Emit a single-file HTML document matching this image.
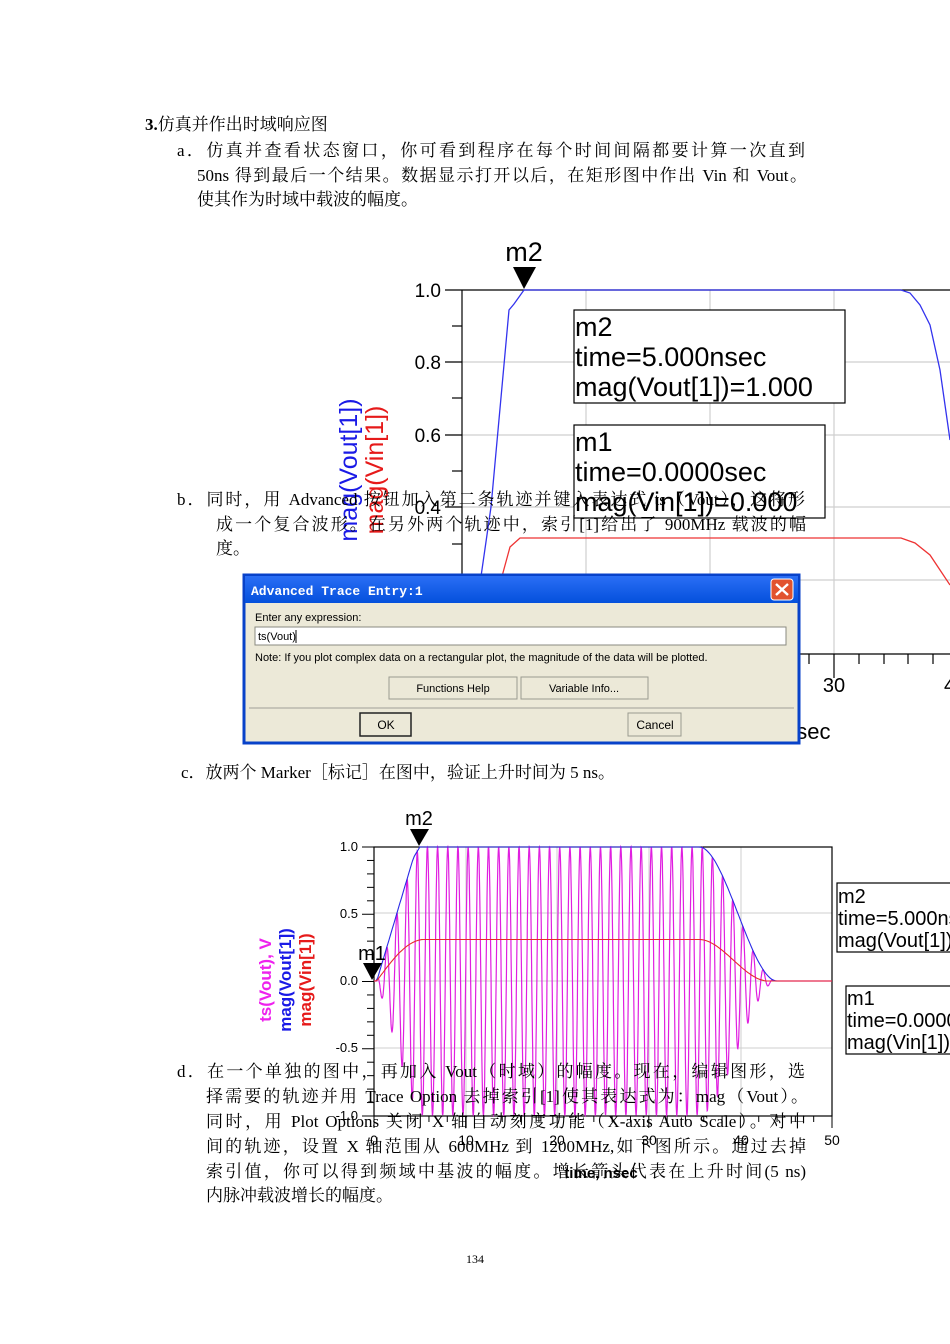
<!DOCTYPE html>
<html><head><meta charset="utf-8"><style>
html,body{margin:0;padding:0;background:#fff;width:950px;height:1344px;overflow:hidden;position:relative}
svg{display:block;position:absolute;left:0;top:0}
.s{font-family:"Liberation Sans",sans-serif}
.l{position:absolute;font-family:"Liberation Serif","Noto Serif CJK SC",serif;font-size:17px;line-height:20px;white-space:nowrap;color:#000}
.j{text-align:justify;text-align-last:justify;white-space:normal;overflow:hidden;height:20px}
</style></head><body>
<svg id="sv" width="950" height="1344" viewBox="0 0 950 1344" xmlns="http://www.w3.org/2000/svg">
<rect width="950" height="1344" fill="#fff"/>

<!-- ===== TOP CHART ===== -->
<g stroke="#cfcfcf" stroke-width="1.2">
  <line x1="462" y1="362" x2="950" y2="362"/><line x1="462" y1="435" x2="950" y2="435"/>
  <line x1="462" y1="507" x2="950" y2="507"/><line x1="462" y1="580" x2="950" y2="580"/>
  <line x1="586" y1="290" x2="586" y2="654"/><line x1="710" y1="290" x2="710" y2="654"/>
  <line x1="834" y1="290" x2="834" y2="654"/>
</g>
<g stroke="#000" stroke-width="1.2">
  <line x1="462" y1="290" x2="950" y2="290"/>
  <line x1="462" y1="290" x2="462" y2="654"/>
  <line x1="462" y1="654" x2="950" y2="654"/>
  <line x1="445" y1="290" x2="462" y2="290"/><line x1="445" y1="362" x2="462" y2="362"/>
  <line x1="445" y1="435" x2="462" y2="435"/><line x1="445" y1="507" x2="462" y2="507"/>
  <line x1="445" y1="580" x2="462" y2="580"/>
  <line x1="452" y1="326" x2="462" y2="326"/><line x1="452" y1="398" x2="462" y2="398"/>
  <line x1="452" y1="471" x2="462" y2="471"/><line x1="452" y1="544" x2="462" y2="544"/>
  <line x1="809" y1="654" x2="809" y2="664"/><line x1="834" y1="654" x2="834" y2="678"/>
  <line x1="859" y1="654" x2="859" y2="664"/><line x1="884" y1="654" x2="884" y2="664"/>
  <line x1="908" y1="654" x2="908" y2="664"/><line x1="933" y1="654" x2="933" y2="664"/>
</g>
<g class="s" font-size="19" fill="#000" text-anchor="end">
  <text x="441" y="297">1.0</text><text x="441" y="369">0.8</text>
  <text x="441" y="442">0.6</text><text x="441" y="514">0.4</text><text x="441" y="587">0.2</text>
</g>
<text class="s" x="834" y="692" font-size="20" text-anchor="middle">30</text>
<text class="s" x="944" y="692" font-size="20">4</text>
<text class="s" x="784" y="739" font-size="22">nsec</text>
<polyline fill="none" stroke="#3333ee" stroke-width="1.3" points="470,653 491,507 509,310 514,304 524,290 901,290 910,293 920,305 930,325 940,370 950,440"/>
<polyline fill="none" stroke="#ee3333" stroke-width="1.3" points="485,653 494,610 501,580 510,547 520,538 901,538 915,543 930,555 940,570 950,585"/>
<text class="s" x="524" y="261" font-size="27" text-anchor="middle">m2</text>
<polygon points="513,267 536,267 524,289" fill="#000"/>
<g transform="translate(357,470) rotate(-90)"><text class="s" font-size="25" fill="#1a1ae6" text-anchor="middle">mag(Vout[1])</text></g>
<g transform="translate(383,470) rotate(-90)"><text class="s" font-size="25" fill="#e61a1a" text-anchor="middle">mag(Vin[1])</text></g>
<rect x="574" y="310" width="271" height="93" fill="#fff" stroke="#000" stroke-width="1.2"/>
<g class="s" font-size="27" fill="#000">
  <text x="575" y="336">m2</text><text x="575" y="366">time=5.000nsec</text><text x="575" y="396">mag(Vout[1])=1.000</text>
</g>
<rect x="574" y="425" width="251" height="93" fill="#fff" stroke="#000" stroke-width="1.2"/>
<g class="s" font-size="27" fill="#000">
  <text x="575" y="451">m1</text><text x="575" y="481">time=0.0000sec</text><text x="575" y="511">mag(Vin[1])=0.000</text>
</g>

<!-- ===== DIALOG ===== -->
<rect x="244" y="575" width="555" height="168" fill="#ece9d8" stroke="#0842c9" stroke-width="3"/>
<defs><linearGradient id="tb" x1="0" y1="0" x2="0" y2="1"><stop offset="0" stop-color="#2a6ef5"/><stop offset="1" stop-color="#0450dc"/></linearGradient></defs>
<rect x="245" y="576" width="553" height="27" fill="url(#tb)"/>
<text x="251" y="595" font-family="Liberation Mono,monospace" font-weight="bold" font-size="13" fill="#fff">Advanced Trace Entry:1</text>
<rect x="771" y="579" width="22" height="21" rx="3" fill="#e2532f" stroke="#fff" stroke-width="1"/>
<path d="M776,584 L788,595 M788,584 L776,595" stroke="#fff" stroke-width="2.4"/>
<g class="s" font-size="11" fill="#000">
  <text x="255" y="621">Enter any expression:</text>
  <text x="255" y="661">Note: If you plot complex data on a rectangular plot, the magnitude of the data will be plotted.</text>
</g>
<rect x="255" y="627" width="531" height="18" fill="#fff" stroke="#8a8a80" stroke-width="1"/>
<text class="s" x="258" y="640" font-size="11">ts(Vout)</text>
<line x1="296" y1="630" x2="296" y2="643" stroke="#000"/>
<rect x="389" y="677" width="128" height="22" fill="#ece9d8" stroke="#9a9a90"/>
<rect x="521" y="677" width="127" height="22" fill="#ece9d8" stroke="#9a9a90"/>
<text class="s" x="453" y="692" font-size="11" text-anchor="middle">Functions Help</text>
<text class="s" x="584" y="692" font-size="11" text-anchor="middle">Variable Info...</text>
<line x1="249" y1="708" x2="794" y2="708" stroke="#a0a098"/>
<rect x="360" y="713" width="51" height="23" fill="#ece9d8" stroke="#222" stroke-width="1.5"/>
<rect x="628" y="713" width="53" height="23" fill="#ece9d8" stroke="#9a9a90"/>
<text class="s" x="386" y="729" font-size="12" text-anchor="middle">OK</text>
<text class="s" x="655" y="729" font-size="12" text-anchor="middle">Cancel</text>

<!-- ===== BOTTOM CHART ===== -->
<g stroke="#cfcfcf" stroke-width="1">
  <line x1="374" y1="913" x2="832" y2="913"/><line x1="374" y1="981" x2="832" y2="981"/>
  <line x1="374" y1="1048" x2="832" y2="1048"/>
  <line x1="466" y1="847" x2="466" y2="1116"/><line x1="557" y1="847" x2="557" y2="1116"/>
  <line x1="649" y1="847" x2="649" y2="1116"/><line x1="741" y1="847" x2="741" y2="1116"/>
</g>
<rect x="374" y="847" width="458" height="269" fill="none" stroke="#000" stroke-width="1.2"/>
<g id="bt" stroke="#000" stroke-width="1"></g>
<g class="s" font-size="13" fill="#000" text-anchor="end">
  <text x="358" y="851">1.0</text><text x="358" y="918">0.5</text><text x="358" y="985">0.0</text>
  <text x="358" y="1052">-0.5</text><text x="358" y="1120">-1.0</text>
</g>
<g class="s" font-size="14" fill="#000" text-anchor="middle">
  <text x="374" y="1145">0</text><text x="466" y="1145">10</text><text x="557" y="1145">20</text>
  <text x="649" y="1145">30</text><text x="741" y="1145">40</text><text x="832" y="1145">50</text>
</g>
<text class="s" x="601" y="1178" font-size="15" font-weight="bold" text-anchor="middle">time, nsec</text>
<path id="mag" fill="none" stroke="#e01ee0" stroke-width="1.2" d=""/>
<path id="blu" fill="none" stroke="#2a2ae6" stroke-width="1.1" d=""/>
<path id="red" fill="none" stroke="#e62a2a" stroke-width="1.1" d=""/>
<text class="s" x="419" y="825" font-size="20" text-anchor="middle">m2</text>
<polygon points="410,829 429,829 419,846" fill="#000"/>
<text class="s" x="372" y="960" font-size="20" text-anchor="middle">m1</text>
<polygon points="363,963 382,963 372,980" fill="#000"/>
<g transform="translate(271,980) rotate(-90)"><text class="s" font-size="17" font-weight="bold" fill="#ee22ee" text-anchor="middle">ts(Vout), V</text></g>
<g transform="translate(291,980) rotate(-90)"><text class="s" font-size="17" font-weight="bold" fill="#1a1ae6" text-anchor="middle">mag(Vout[1])</text></g>
<g transform="translate(311,980) rotate(-90)"><text class="s" font-size="17" font-weight="bold" fill="#e61a1a" text-anchor="middle">mag(Vin[1])</text></g>
<rect x="837" y="883" width="120" height="69" fill="#fff" stroke="#000" stroke-width="1.2"/>
<g class="s" font-size="20"><text x="838" y="903">m2</text><text x="838" y="925">time=5.000nsec</text><text x="838" y="947">mag(Vout[1])</text></g>
<rect x="846" y="986" width="120" height="68" fill="#fff" stroke="#000" stroke-width="1.2"/>
<g class="s" font-size="20"><text x="847" y="1005">m1</text><text x="847" y="1027">time=0.0000sec</text><text x="847" y="1049">mag(Vin[1])</text></g>
<text x="475" y="1263" font-family="Liberation Serif,serif" font-size="12" text-anchor="middle">134</text>
</svg>

<div class="l" style="left:145px;top:115px"><b>3.</b>仿真并作出时域响应图</div>
<div class="l j" style="left:177px;top:141px;width:628px">a．仿真并查看状态窗口，你可看到程序在每个时间间隔都要计算一次直到</div>
<div class="l j" style="left:197px;top:166px;width:610px">50ns 得到最后一个结果。数据显示打开以后，在矩形图中作出 Vin 和 Vout。</div>
<div class="l" style="left:197px;top:190px">使其作为时域中载波的幅度。</div>
<div class="l j" style="left:177px;top:490px;width:628px">b．同时，用 Advanced 按钮加入第二条轨迹并键入表达式 ts（Vout），这将形</div>
<div class="l j" style="left:216px;top:515px;width:590px">成一个复合波形。在另外两个轨迹中，索引[1]给出了 900MHz 载波的幅</div>
<div class="l" style="left:216px;top:539px">度。</div>
<div class="l" style="left:181px;top:763px">c．放两个 Marker［标记］在图中，验证上升时间为 5 ns。</div>
<div class="l j" style="left:177px;top:1062px;width:628px">d．在一个单独的图中，再加入 Vout（时域）的幅度。现在，编辑图形，选</div>
<div class="l j" style="left:206px;top:1087px;width:602px">择需要的轨迹并用 Trace Option 去掉索引[1]使其表达式为：mag（Vout）。</div>
<div class="l j" style="left:206px;top:1112px;width:600px">同时，用 Plot Options 关闭 X 轴自动刻度功能（X-axis Auto Scale）。对中</div>
<div class="l j" style="left:206px;top:1137px;width:600px">间的轨迹，设置 X 轴范围从 600MHz 到 1200MHz,如下图所示。通过去掉</div>
<div class="l j" style="left:206px;top:1162px;width:600px">索引值，你可以得到频域中基波的幅度。增长箭头代表在上升时间(5 ns)</div>
<div class="l" style="left:206px;top:1186px">内脉冲载波增长的幅度。</div>

<script>
(function(){
 var X=function(t){return 374+t*9.16}, Y=function(v){return 981-v*134};
 function env(t){
  if(t<0.3)return 0;
  if(t<5){var u=(t-0.3)/4.7;return Math.min(1,u<0.85?u*1.08:0.918+(u-0.85)*0.55);}
  if(t<35.5)return 1;
  if(t<44){var u=(t-35.5)/8.5;return Math.max(0,1-u*u*(3-2*u));}
  return 0;
 }
 function renv(t){
  if(t<0.3)return 0;
  if(t<5.5){var u=(t-0.3)/5.2;return 0.31*Math.sin(u*Math.PI/2);}
  if(t<35.5)return 0.31;
  if(t<43){var u=(t-35.5)/7.5;return 0.31*(1-u*u*(3-2*u));}
  return 0;
 }
 var m="",b="",r="";
 for(var t=0;t<=50.001;t+=0.02){
  var e=env(t);var v=e*Math.sin(2*Math.PI*0.9*t);
  m+=(t==0?"M":"L")+X(t).toFixed(1)+","+Y(v).toFixed(1);
 }
 for(var t=0;t<=50.001;t+=0.2){
  b+=(t==0?"M":"L")+X(t).toFixed(1)+","+Y(env(t)).toFixed(1);
  r+=(t==0?"M":"L")+X(t).toFixed(1)+","+Y(renv(t)).toFixed(1);
 }
 document.getElementById("mag").setAttribute("d",m);
 document.getElementById("blu").setAttribute("d",b);
 document.getElementById("red").setAttribute("d",r);
 var g=document.getElementById("bt"),ns="http://www.w3.org/2000/svg";
 for(var i=0;i<=20;i++){
  var y=847+i*13.45,l=document.createElementNS(ns,"line");
  l.setAttribute("x1",i%5==0?362:367);l.setAttribute("x2",374);
  l.setAttribute("y1",y);l.setAttribute("y2",y);g.appendChild(l);
 }
 for(var i=0;i<=25;i++){
  var x=374+i*18.32,l=document.createElementNS(ns,"line");
  l.setAttribute("x1",x);l.setAttribute("x2",x);
  l.setAttribute("y1",1116);l.setAttribute("y2",i%5==0?1128:1122);g.appendChild(l);
 }
})();
</script>
</body></html>
